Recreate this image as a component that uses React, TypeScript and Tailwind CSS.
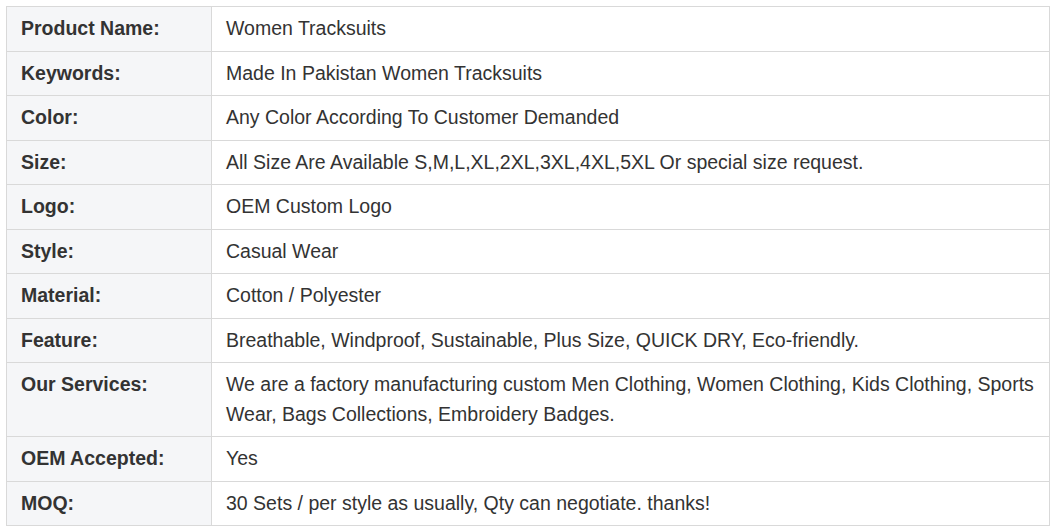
import React from "react";

const rows: [string, string][] = [
  ["Product Name:", "Women Tracksuits"],
  ["Keywords:", "Made In Pakistan Women Tracksuits"],
  ["Color:", "Any Color According To Customer Demanded"],
  ["Size:", "All Size Are Available S,M,L,XL,2XL,3XL,4XL,5XL Or special size request."],
  ["Logo:", "OEM Custom Logo"],
  ["Style:", "Casual Wear"],
  ["Material:", "Cotton / Polyester"],
  ["Feature:", "Breathable, Windproof, Sustainable, Plus Size, QUICK DRY, Eco-friendly."],
  [
    "Our Services:",
    "We are a factory manufacturing custom Men Clothing, Women Clothing, Kids Clothing, Sports Wear, Bags Collections, Embroidery Badges.",
  ],
  ["OEM Accepted:", "Yes"],
  ["MOQ:", "30 Sets / per style as usually, Qty can negotiate. thanks!"],
];

export default function App() {
  return (
    <div className="w-[1060px] h-[531px] bg-white pt-[6px] pl-[6px] font-['Liberation_Sans',Arial,sans-serif] text-[#333333]">
      <table className="w-[1044px] border-collapse text-[19.5px] leading-[29.5px]">
        <tbody>
          {rows.map(([k, v]) => (
            <tr key={k}>
              <td className="w-[205px] border border-[#d9d9d9] bg-[#f5f6f8] px-[14px] py-[7px] align-top font-bold">
                {k}
              </td>
              <td className="border border-[#d9d9d9] bg-white pl-[14px] pr-[10px] py-[7px] align-top">{v}</td>
            </tr>
          ))}
        </tbody>
      </table>
    </div>
  );
}
